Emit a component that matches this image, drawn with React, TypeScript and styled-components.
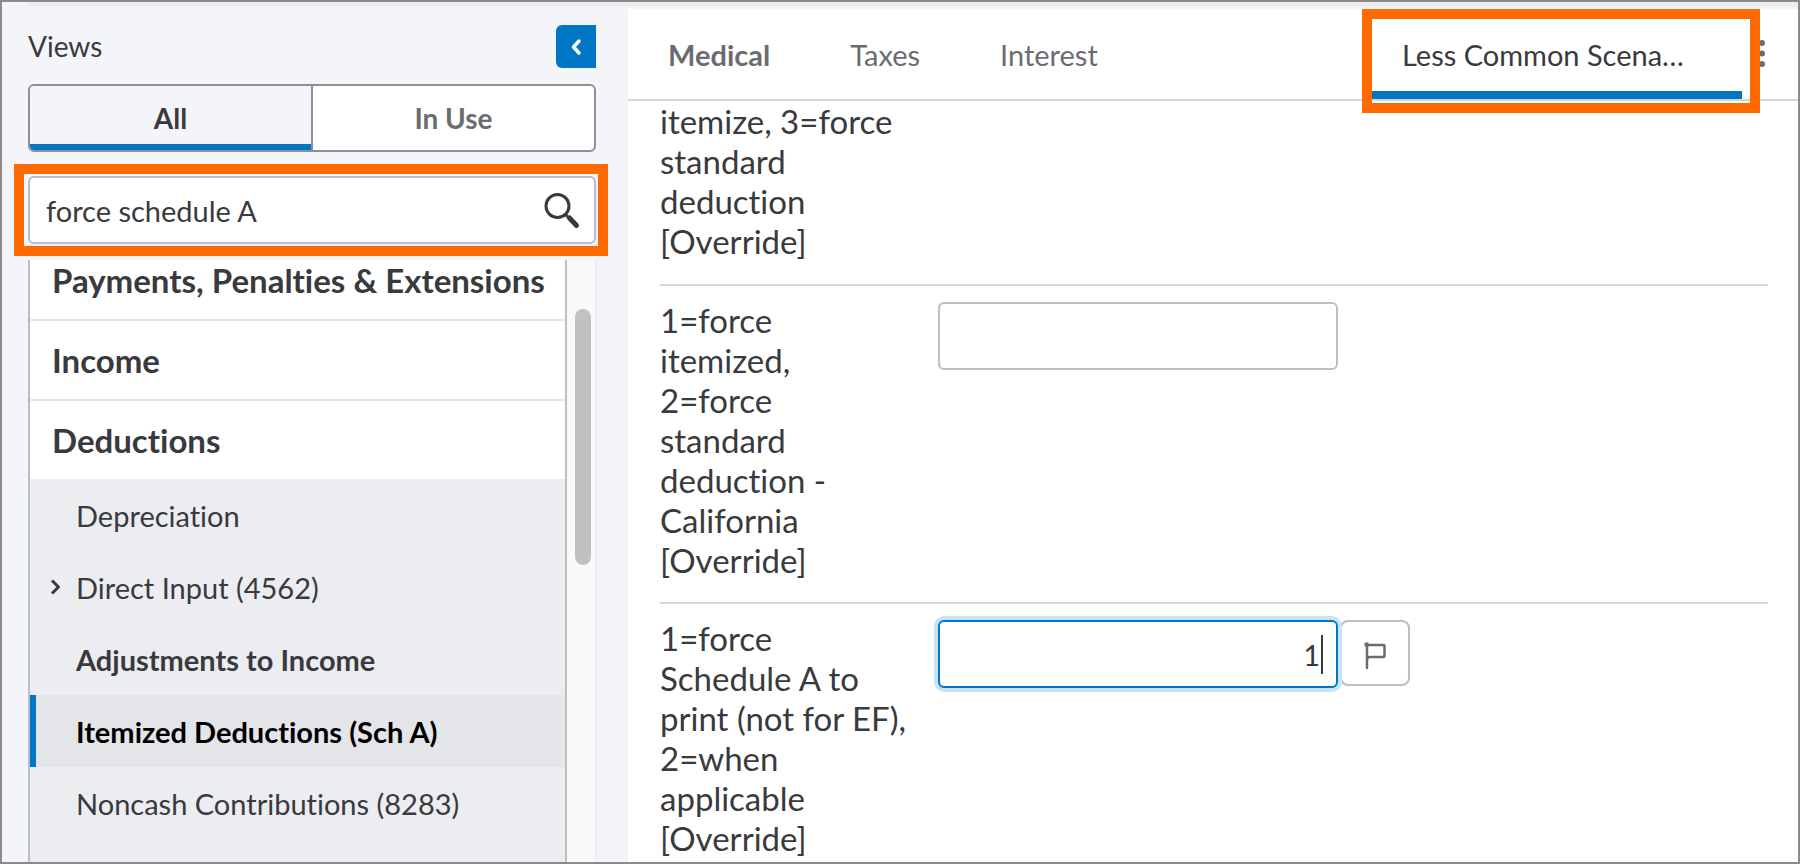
import React, { useState } from "react";
import styled, { createGlobalStyle, css } from "styled-components";

const color = {
  blue: "#0077c5",
  orange: "#ff6a00",
  ink: "#393a3d",
  muted: "#6b6c72",
  panel: "#f4f5f9",
  nested: "#ecedf1",
  line: "#d4d7dc",
  field: "#babec5",
};

const GlobalStyle = createGlobalStyle`
  *, *::before, *::after { box-sizing: border-box; }
  body { margin: 0; }
  body, button, input {
    font-family: Lato, "Liberation Sans", sans-serif;
    font-variant-ligatures: none;
    color: ${color.ink};
  }
  button { margin: 0; padding: 0; border: 0; background: none; cursor: pointer; }
`;

const Page = styled.div`
  display: flex;
  flex-direction: column;
  height: 100vh;
  min-height: 640px;
  border: 2px solid #8b8b8b;
  background: ${color.panel};
  overflow: hidden;
`;

const TopStrip = styled.div`
  flex: none;
  height: 5px;
  margin: 0 0 2px 26px;
  background: ${color.nested};
`;

const Body = styled.div`
  display: flex;
  flex: 1;
  min-height: 0;
`;

const Sidebar = styled.aside`
  display: flex;
  flex-direction: column;
  flex: none;
  width: 626px;
  padding: 16px 32px 0 26px;
`;

const SidebarHeader = styled.div`
  display: flex;
  justify-content: space-between;
  margin-bottom: 16px;
`;

const SidebarTitle = styled.h1`
  margin: 0;
  font-size: 28px;
  font-weight: 400;
  line-height: 42px;
`;

const CollapseButton = styled.button`
  display: flex;
  align-items: center;
  justify-content: center;
  width: 40px;
  height: 43px;
  border-radius: 6px 0 0 6px;
  background: ${color.blue};
`;

const Segments = styled.div`
  display: flex;
  flex: none;
  height: 68px;
  margin-bottom: 24px;
  border: 2px solid #8d9096;
  border-radius: 6px;
  background: #fff;
  overflow: hidden;
`;

const Segment = styled.button<{ $active: boolean }>`
  flex: 1;
  font-size: 28px;
  font-weight: 700;
  color: ${color.muted};
  & + & { border-left: 2px solid #8d9096; }
  ${(p) =>
    p.$active &&
    css`
      background: ${color.panel};
      color: ${color.ink};
      box-shadow: inset 0 -6px 0 ${color.blue};
    `}
`;

const SearchBox = styled.div`
  position: relative;
  flex: none;
  margin-bottom: 16px;
`;

const SearchInput = styled.input`
  display: block;
  width: 100%;
  height: 68px;
  padding: 0 64px 0 16px;
  border: 2px solid ${color.field};
  border-radius: 6px;
  background: #fff;
  font-size: 29px;
  outline: none;
`;

const SearchButton = styled.button`
  position: absolute;
  top: 16px;
  right: 14px;
  width: 38px;
  height: 38px;
`;

const Highlight = styled.div<{ $inset: string }>`
  position: absolute;
  inset: ${(p) => p.$inset};
  z-index: 1;
  border: 10px solid ${color.orange};
  pointer-events: none;
`;

const ListArea = styled.div`
  display: flex;
  flex: 1;
  min-height: 0;
`;

const List = styled.nav`
  flex: 1;
  border: solid ${color.field};
  border-width: 0 2px;
  background: ${color.nested};
  overflow: hidden;
`;

const Group = styled.button<{ $scrolled?: boolean; $open?: boolean }>`
  display: block;
  width: 100%;
  padding: ${(p) => (p.$scrolled ? "0" : "19px")} 22px 19px;
  border-bottom: ${(p) => (p.$open ? 0 : 2)}px solid #e3e5e8;
  background: #fff;
  font-size: 33px;
  font-weight: 700;
  line-height: 40px;
  text-align: left;
  white-space: nowrap;
`;

const Item = styled.a<{ $bold?: boolean; $active?: boolean }>`
  display: flex;
  align-items: center;
  height: 72px;
  padding-left: 14px;
  border-left: 6px solid transparent;
  color: ${color.ink};
  font-size: 29px;
  font-weight: ${(p) => (p.$bold ? 700 : 400)};
  text-decoration: none;
  white-space: nowrap;
  ${(p) =>
    p.$active &&
    css`
      border-color: ${color.blue};
      background: #e3e5e9;
      color: #000;
    `}
`;

const ItemMarker = styled.span`
  display: flex;
  width: 26px;
`;

const ScrollTrack = styled.div`
  flex: none;
  width: 29px;
  padding: 49px 5px 0 8px;
  border-right: 1px solid #e8e8e8;
  background: #fafafa;
`;

const ScrollThumb = styled.div`
  width: 16px;
  height: 256px;
  border-radius: 8px;
  background: #c1c1c1;
`;

const Main = styled.main`
  display: flex;
  flex-direction: column;
  flex: 1;
  min-width: 0;
  background: #fff;
`;

const TabBar = styled.div`
  display: flex;
  flex: none;
  height: 92px;
  padding-right: 16px;
  border-bottom: 2px solid ${color.line};
`;

const Tab = styled.button<{ $visited?: boolean }>`
  padding: 0 40px;
  color: ${color.muted};
  font-size: 29px;
  font-weight: ${(p) => (p.$visited ? 700 : 400)};
`;

const ActiveTabSlot = styled.div`
  position: relative;
  display: flex;
  width: 370px;
  margin-left: auto;
`;

const ActiveTab = styled.button`
  flex: 1;
  padding: 8px 30px 0;
  border-bottom: 8px solid ${color.blue};
  font-size: 29px;
  text-align: left;
  white-space: nowrap;
`;

const MoreButton = styled.button`
  display: flex;
  align-items: center;
  justify-content: center;
  width: 40px;
`;

const Form = styled.form`
  padding: 0 30px 0 32px;
`;

const Row = styled.div`
  display: flex;
  align-items: flex-start;
  padding: 14px 0 22px;
  border-bottom: 2px solid ${color.line};
  &:first-child { padding-top: 0; padding-bottom: 23px; }
  &:last-child { border-bottom: 0; padding-bottom: 0; }
`;

const RowLabel = styled.label`
  flex: none;
  width: 278px;
  font-size: 33px;
  line-height: 40px;
  white-space: pre-line;
`;

const Field = styled.div`
  position: relative;
  width: 400px;
  margin-top: 2px;
`;

const FieldInput = styled.input<{ $focused?: boolean }>`
  display: block;
  width: 100%;
  height: 68px;
  padding: 0 16px;
  border: 2px solid ${color.field};
  border-radius: 6px;
  background: #fff;
  font-size: 29px;
  text-align: right;
  outline: none;
  ${(p) =>
    p.$focused &&
    css`
      border-color: ${color.blue};
      box-shadow: 0 0 0 4px #c9e3f4;
      caret-color: transparent;
    `}
`;

const Caret = styled.span`
  position: absolute;
  top: 15px;
  right: 15px;
  width: 2px;
  height: 39px;
  background: ${color.ink};
`;

const FlagButton = styled.button`
  display: flex;
  align-items: center;
  justify-content: center;
  width: 70px;
  height: 66px;
  margin: 2px 0 0 2px;
  border: 2px solid ${color.field};
  border-radius: 8px;
`;

const items = [
  { text: "Depreciation" },
  { text: "Direct Input (4562)", expandable: true },
  { text: "Adjustments to Income", bold: true },
  { text: "Itemized Deductions (Sch A)", bold: true, active: true },
  { text: "Noncash Contributions (8283)" },
];

export default function App() {
  const [query, setQuery] = useState("force schedule A");
  const [itemized, setItemized] = useState("");
  const [scheduleA, setScheduleA] = useState("1");
  const [view, setView] = useState("All");

  return (
    <Page>
      <GlobalStyle />
      <TopStrip />
      <Body>
        <Sidebar>
          <SidebarHeader>
            <SidebarTitle>Views</SidebarTitle>
            <CollapseButton aria-label="Collapse views">
              <svg width="12" height="18" viewBox="0 0 12 18" fill="none" stroke="#fff" strokeWidth="3.500" strokeLinecap="round" strokeLinejoin="round">
                <path d="M9 3 3.500 9 9 15" />
              </svg>
            </CollapseButton>
          </SidebarHeader>
          <Segments>
            {["All", "In Use"].map((name) => (
              <Segment key={name} $active={view === name} onClick={() => setView(name)}>
                {name}
              </Segment>
            ))}
          </Segments>
          <SearchBox>
            <SearchInput aria-label="Search views" value={query} onChange={(e) => setQuery(e.target.value)} />
            <SearchButton aria-label="Search">
              <svg width="38" height="38" viewBox="0 0 38 38" fill="none" stroke={color.ink} strokeLinecap="round">
                <circle cx="13.500" cy="14" r="11.500" strokeWidth="3" />
                <path d="M22 23 25 26" strokeWidth="3" />
                <path d="M25.500 26 32.500 33.500" strokeWidth="5" />
              </svg>
            </SearchButton>
            <Highlight $inset="-12px -12px -12px -14px" />
          </SearchBox>
          <ListArea>
            <List aria-label="Views">
              <Group $scrolled>Payments, Penalties &amp; Extensions</Group>
              <Group>Income</Group>
              <Group $open>Deductions</Group>
              {items.map((item) => (
                <Item key={item.text} href="#" $bold={item.bold} $active={item.active}>
                  <ItemMarker>
                    {item.expandable && (
                      <svg width="12" height="18" viewBox="0 0 12 18" fill="none" stroke={color.ink} strokeWidth="3" strokeLinejoin="round">
                        <path d="M2 2.500 8.500 9 2 15.500" />
                      </svg>
                    )}
                  </ItemMarker>
                  {item.text}
                </Item>
              ))}
            </List>
            <ScrollTrack>
              <ScrollThumb />
            </ScrollTrack>
          </ListArea>
        </Sidebar>
        <Main>
          <TabBar>
            <Tab $visited>Medical</Tab>
            <Tab>Taxes</Tab>
            <Tab>Interest</Tab>
            <ActiveTabSlot>
              <ActiveTab>Less Common Scena…</ActiveTab>
              <Highlight $inset="0 -18px -14px -10px" />
            </ActiveTabSlot>
            <MoreButton aria-label="More tabs">
              <svg width="8" height="30" viewBox="0 0 8 30" fill={color.muted}>
                <circle cx="4" cy="4" r="3" />
                <circle cx="4" cy="14.500" r="3" />
                <circle cx="4" cy="25" r="3" />
              </svg>
            </MoreButton>
          </TabBar>
          <Form>
            <Row>
              <RowLabel as="span">{"itemize, 3=force\nstandard\ndeduction\n[Override]"}</RowLabel>
            </Row>
            <Row>
              <RowLabel htmlFor="force-itemized">
                {"1=force\nitemized,\n2=force\nstandard\ndeduction -\nCalifornia\n[Override]"}
              </RowLabel>
              <Field>
                <FieldInput id="force-itemized" value={itemized} onChange={(e) => setItemized(e.target.value)} />
              </Field>
            </Row>
            <Row>
              <RowLabel htmlFor="force-schedule-a">
                {"1=force\nSchedule A to\nprint (not for EF),\n2=when\napplicable\n[Override]"}
              </RowLabel>
              <Field>
                <FieldInput
                  id="force-schedule-a"
                  $focused
                  value={scheduleA}
                  onChange={(e) => setScheduleA(e.target.value)}
                />
                <Caret />
              </Field>
              <FlagButton type="button" aria-label="Flag this field">
                <svg width="24" height="34" viewBox="0 0 24 34" fill="none" stroke={color.muted} strokeWidth="2.500" strokeLinecap="round" strokeLinejoin="round">
                  <circle cx="3.500" cy="8.500" r="1.500" fill={color.muted} strokeWidth="1.500" />
                  <path d="M4 9V32" />
                  <path d="M4 9H20.500Q21.500 9 21.500 10V20Q21.500 21 20.500 21H7Q4 21 4 23.500" />
                </svg>
              </FlagButton>
            </Row>
          </Form>
        </Main>
      </Body>
    </Page>
  );
}
